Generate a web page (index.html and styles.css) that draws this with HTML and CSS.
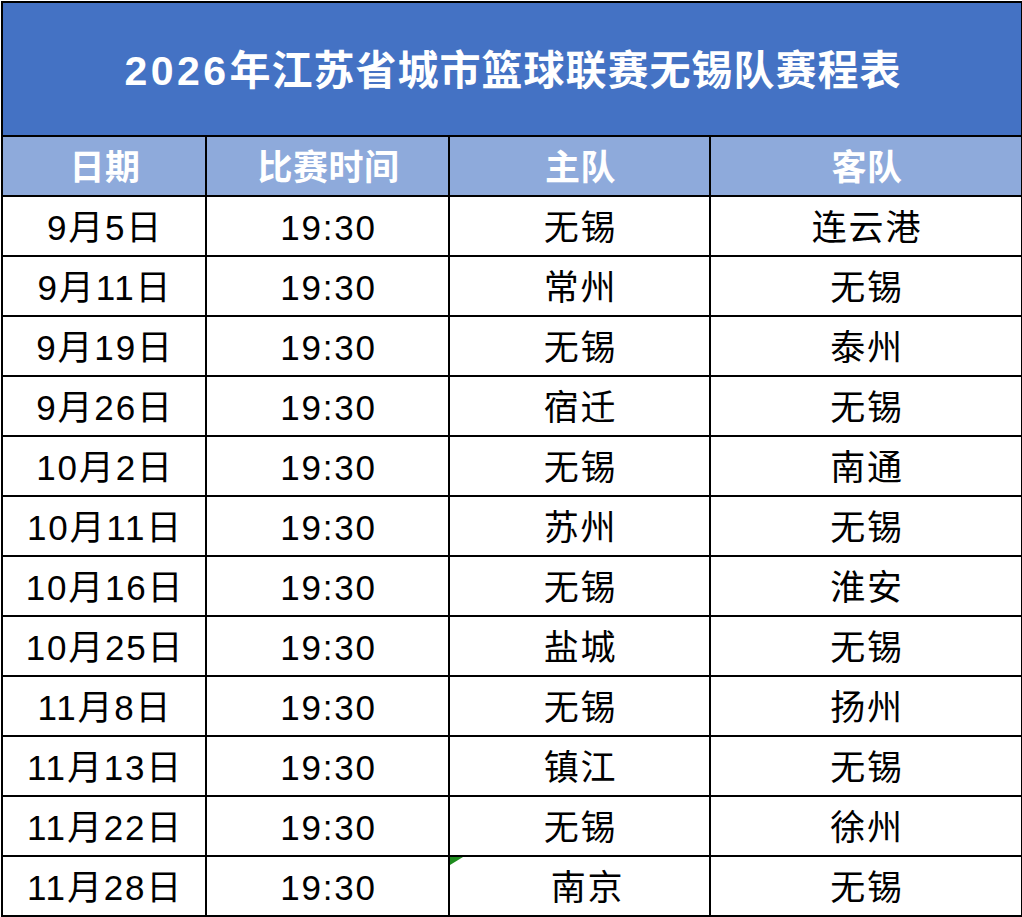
FILE: index.html
```html
<!DOCTYPE html>
<html lang="zh">
<head>
<meta charset="utf-8">
<link rel="stylesheet" href="styles.css">
</head>
<body>
<table class="sched">
<colgroup><col class="c1"><col class="c2"><col class="c3"><col class="c4"></colgroup>
<tr class="title"><td colspan="4"><span class="yr">2026</span>年江苏省城市篮球联赛无锡队赛程表</td></tr>
<tr class="head"><td>日期</td><td>比赛时间</td><td>主队</td><td>客队</td></tr>
<tr><td>9月5日</td><td>19:30</td><td>无锡</td><td>连云港</td></tr>
<tr><td>9月11日</td><td>19:30</td><td>常州</td><td>无锡</td></tr>
<tr><td>9月19日</td><td>19:30</td><td>无锡</td><td>泰州</td></tr>
<tr><td>9月26日</td><td>19:30</td><td>宿迁</td><td>无锡</td></tr>
<tr><td>10月2日</td><td>19:30</td><td>无锡</td><td>南通</td></tr>
<tr><td>10月11日</td><td>19:30</td><td>苏州</td><td>无锡</td></tr>
<tr><td>10月16日</td><td>19:30</td><td>无锡</td><td>淮安</td></tr>
<tr><td>10月25日</td><td>19:30</td><td>盐城</td><td>无锡</td></tr>
<tr><td>11月8日</td><td>19:30</td><td>无锡</td><td>扬州</td></tr>
<tr><td>11月13日</td><td>19:30</td><td>镇江</td><td>无锡</td></tr>
<tr><td>11月22日</td><td>19:30</td><td>无锡</td><td>徐州</td></tr>
<tr><td>11月28日</td><td>19:30</td><td class="flag"><span class="tri"></span><span class="shift">南京</span></td><td>无锡</td></tr>
</table>
</body>
</html>
```
FILE: styles.css
```css
html, body {
  margin: 0;
  padding: 0;
  background: #ffffff;
}
.sched {
  border-collapse: collapse;
  table-layout: fixed;
  width: 1020px;
  margin-left: 1px;
  margin-top: 1px;
  font-family: "Liberation Sans", "Noto Sans CJK SC", sans-serif;
  color: #000;
}
.c1 { width: 204px; }
.c2 { width: 243px; }
.c3 { width: 261px; }
.c4 { width: 312px; }
.sched td {
  border: 2px solid #000;
  text-align: center;
  vertical-align: middle;
  height: 55px;
  padding: 3px 0 0 2px;
  font-size: 35px;
  letter-spacing: 1.8px;
  line-height: 1;
  position: relative;
}
.sched tr.title td {
  background: #4472c4;
  color: #fff;
  font-weight: bold;
  font-size: 41px;
  letter-spacing: 1px;
  height: 127px;
  padding: 5px 0 0 2px;
}
.yr {
  letter-spacing: 3.4px;
}
.sched tr.head td {
  background: #8eaadb;
  color: #fff;
  font-weight: bold;
  font-size: 35px;
  letter-spacing: 0.5px;
  height: 56px;
  padding: 2px 0 0 2px;
}
.tri {
  position: absolute;
  left: 0;
  top: 0;
  width: 0;
  height: 0;
  border-top: 8px solid #1e8c1e;
  border-right: 13px solid transparent;
}
.shift {
  padding-left: 14px;
}
```
